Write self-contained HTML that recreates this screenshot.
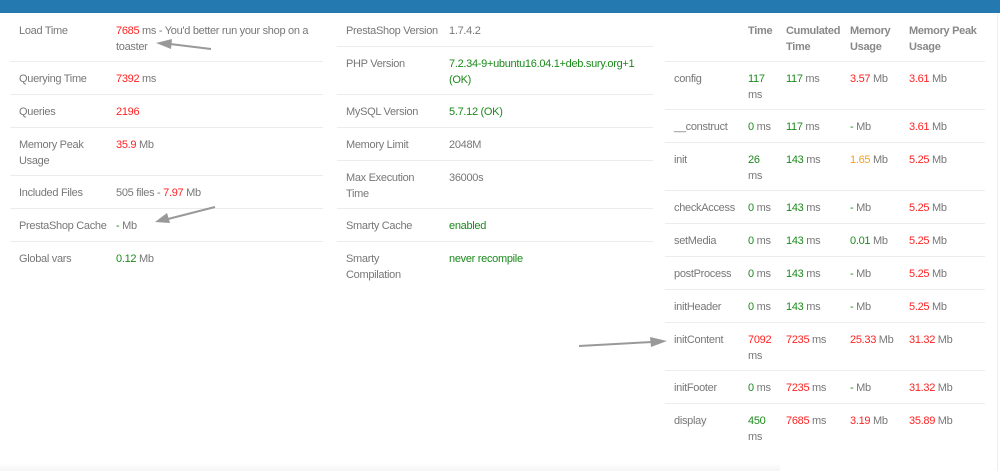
<!DOCTYPE html>
<html><head><meta charset="utf-8"><style>
*{margin:0;padding:0;box-sizing:border-box}
body{width:1000px;height:471px;background:#fff;position:relative;overflow:hidden;font-family:"Liberation Sans",Arial,sans-serif;font-size:11px;letter-spacing:-0.3px;color:#777;line-height:16px}
.bar{position:absolute;left:0;top:0;width:1000px;height:13px;background:#2479b0}
.t{position:absolute;white-space:nowrap;margin-top:1px}
.hl{position:absolute;height:1px;background:#ececec}
.r{color:#f22}.g{color:#1b8a1b}.o{color:#f5a020}
.h{font-weight:bold;color:#888}
</style></head><body>
<div class="bar"></div>
<div style="position:absolute;left:997px;top:13px;width:1px;height:458px;background:#eee"></div>
<div style="position:absolute;left:0;top:463px;width:780px;height:8px;background:linear-gradient(#fff,#f5f5f5)"></div>

<!-- left -->
<div class="hl" style="left:10px;top:61px;width:313px"></div>
<div class="hl" style="left:10px;top:94px;width:313px"></div>
<div class="hl" style="left:10px;top:127px;width:313px"></div>
<div class="hl" style="left:10px;top:175px;width:313px"></div>
<div class="hl" style="left:10px;top:208px;width:313px"></div>
<div class="hl" style="left:10px;top:241px;width:313px"></div>
<div class="t" style="left:19px;top:22px">Load Time</div>
<div class="t" style="left:116px;top:22px"><span class="r">7685</span> ms - You'd better run your shop on a<br>toaster</div>
<div class="t" style="left:19px;top:70px">Querying Time</div>
<div class="t" style="left:116px;top:70px"><span class="r">7392</span> ms</div>
<div class="t" style="left:19px;top:103px">Queries</div>
<div class="t" style="left:116px;top:103px"><span class="r">2196</span></div>
<div class="t" style="left:19px;top:136px">Memory Peak<br>Usage</div>
<div class="t" style="left:116px;top:136px"><span class="r">35.9</span> Mb</div>
<div class="t" style="left:19px;top:184px">Included Files</div>
<div class="t" style="left:116px;top:184px">505 files - <span class="r">7.97</span> Mb</div>
<div class="t" style="left:19px;top:217px">PrestaShop Cache</div>
<div class="t" style="left:116px;top:217px"><span class="g">-</span> Mb</div>
<div class="t" style="left:19px;top:250px">Global vars</div>
<div class="t" style="left:116px;top:250px"><span class="g">0.12</span> Mb</div>

<!-- middle -->
<div class="hl" style="left:337px;top:46px;width:316px"></div>
<div class="hl" style="left:337px;top:94px;width:316px"></div>
<div class="hl" style="left:337px;top:127px;width:316px"></div>
<div class="hl" style="left:337px;top:160px;width:316px"></div>
<div class="hl" style="left:337px;top:208px;width:316px"></div>
<div class="hl" style="left:337px;top:241px;width:316px"></div>
<div class="t" style="left:346px;top:22px">PrestaShop Version</div>
<div class="t" style="left:449px;top:22px">1.7.4.2</div>
<div class="t" style="left:346px;top:55px">PHP Version</div>
<div class="t g" style="left:449px;top:55px">7.2.34-9+ubuntu16.04.1+deb.sury.org+1<br>(OK)</div>
<div class="t" style="left:346px;top:103px">MySQL Version</div>
<div class="t g" style="left:449px;top:103px">5.7.12 (OK)</div>
<div class="t" style="left:346px;top:136px">Memory Limit</div>
<div class="t" style="left:449px;top:136px">2048M</div>
<div class="t" style="left:346px;top:169px">Max Execution<br>Time</div>
<div class="t" style="left:449px;top:169px">36000s</div>
<div class="t" style="left:346px;top:217px">Smarty Cache</div>
<div class="t g" style="left:449px;top:217px">enabled</div>
<div class="t" style="left:346px;top:250px">Smarty<br>Compilation</div>
<div class="t g" style="left:449px;top:250px">never recompile</div>

<!-- right -->
<div class="t h" style="left:748px;top:22px">Time</div>
<div class="t h" style="left:786px;top:22px">Cumulated<br>Time</div>
<div class="t h" style="left:850px;top:22px">Memory<br>Usage</div>
<div class="t h" style="left:909px;top:22px">Memory Peak<br>Usage</div>
<div class="hl" style="left:665px;top:61px;width:320px"></div>
<div class="hl" style="left:665px;top:109px;width:320px"></div>
<div class="hl" style="left:665px;top:142px;width:320px"></div>
<div class="hl" style="left:665px;top:190px;width:320px"></div>
<div class="hl" style="left:665px;top:223px;width:320px"></div>
<div class="hl" style="left:665px;top:256px;width:320px"></div>
<div class="hl" style="left:665px;top:289px;width:320px"></div>
<div class="hl" style="left:665px;top:322px;width:320px"></div>
<div class="hl" style="left:665px;top:370px;width:320px"></div>
<div class="hl" style="left:665px;top:403px;width:320px"></div>

<div class="t" style="left:674px;top:70px">config</div>
<div class="t" style="left:748px;top:70px"><span class="g">117</span><br>ms</div>
<div class="t" style="left:786px;top:70px"><span class="g">117</span> ms</div>
<div class="t" style="left:850px;top:70px"><span class="r">3.57</span> Mb</div>
<div class="t" style="left:909px;top:70px"><span class="r">3.61</span> Mb</div>

<div class="t" style="left:674px;top:118px">__construct</div>
<div class="t" style="left:748px;top:118px"><span class="g">0</span> ms</div>
<div class="t" style="left:786px;top:118px"><span class="g">117</span> ms</div>
<div class="t" style="left:850px;top:118px"><span class="g">-</span> Mb</div>
<div class="t" style="left:909px;top:118px"><span class="r">3.61</span> Mb</div>

<div class="t" style="left:674px;top:151px">init</div>
<div class="t" style="left:748px;top:151px"><span class="g">26</span><br>ms</div>
<div class="t" style="left:786px;top:151px"><span class="g">143</span> ms</div>
<div class="t" style="left:850px;top:151px"><span class="o">1.65</span> Mb</div>
<div class="t" style="left:909px;top:151px"><span class="r">5.25</span> Mb</div>

<div class="t" style="left:674px;top:199px">checkAccess</div>
<div class="t" style="left:748px;top:199px"><span class="g">0</span> ms</div>
<div class="t" style="left:786px;top:199px"><span class="g">143</span> ms</div>
<div class="t" style="left:850px;top:199px"><span class="g">-</span> Mb</div>
<div class="t" style="left:909px;top:199px"><span class="r">5.25</span> Mb</div>

<div class="t" style="left:674px;top:232px">setMedia</div>
<div class="t" style="left:748px;top:232px"><span class="g">0</span> ms</div>
<div class="t" style="left:786px;top:232px"><span class="g">143</span> ms</div>
<div class="t" style="left:850px;top:232px"><span class="g">0.01</span> Mb</div>
<div class="t" style="left:909px;top:232px"><span class="r">5.25</span> Mb</div>

<div class="t" style="left:674px;top:265px">postProcess</div>
<div class="t" style="left:748px;top:265px"><span class="g">0</span> ms</div>
<div class="t" style="left:786px;top:265px"><span class="g">143</span> ms</div>
<div class="t" style="left:850px;top:265px"><span class="g">-</span> Mb</div>
<div class="t" style="left:909px;top:265px"><span class="r">5.25</span> Mb</div>

<div class="t" style="left:674px;top:298px">initHeader</div>
<div class="t" style="left:748px;top:298px"><span class="g">0</span> ms</div>
<div class="t" style="left:786px;top:298px"><span class="g">143</span> ms</div>
<div class="t" style="left:850px;top:298px"><span class="g">-</span> Mb</div>
<div class="t" style="left:909px;top:298px"><span class="r">5.25</span> Mb</div>

<div class="t" style="left:674px;top:331px">initContent</div>
<div class="t" style="left:748px;top:331px"><span class="r">7092</span><br>ms</div>
<div class="t" style="left:786px;top:331px"><span class="r">7235</span> ms</div>
<div class="t" style="left:850px;top:331px"><span class="r">25.33</span> Mb</div>
<div class="t" style="left:909px;top:331px"><span class="r">31.32</span> Mb</div>

<div class="t" style="left:674px;top:379px">initFooter</div>
<div class="t" style="left:748px;top:379px"><span class="g">0</span> ms</div>
<div class="t" style="left:786px;top:379px"><span class="r">7235</span> ms</div>
<div class="t" style="left:850px;top:379px"><span class="g">-</span> Mb</div>
<div class="t" style="left:909px;top:379px"><span class="r">31.32</span> Mb</div>

<div class="t" style="left:674px;top:412px">display</div>
<div class="t" style="left:748px;top:412px"><span class="g">450</span><br>ms</div>
<div class="t" style="left:786px;top:412px"><span class="r">7685</span> ms</div>
<div class="t" style="left:850px;top:412px"><span class="r">3.19</span> Mb</div>
<div class="t" style="left:909px;top:412px"><span class="r">35.89</span> Mb</div>

<svg style="position:absolute;left:0;top:0" width="1000" height="471">
<g stroke="#999" stroke-width="2" fill="#999">
<line x1="211" y1="49" x2="170" y2="44"/>
<polygon points="156,43 172,39 171,49" stroke="none"/>
<line x1="215" y1="207" x2="168" y2="219"/>
<polygon points="155,222 167,213 170,223" stroke="none"/>
<line x1="579" y1="346" x2="652" y2="342"/>
<polygon points="667,341 650,337 651,347" stroke="none"/>
</g></svg>
</body></html>
